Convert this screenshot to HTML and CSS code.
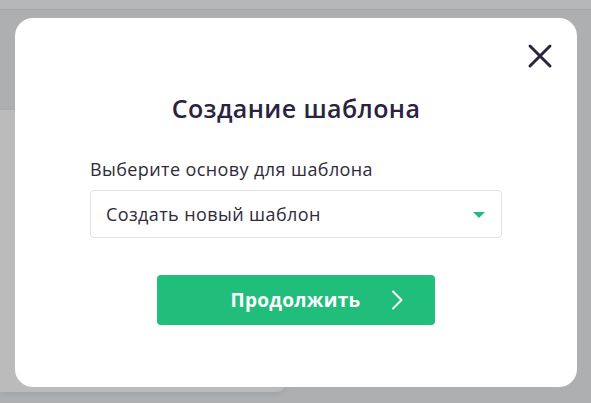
FILE: index.html
```html
<!DOCTYPE html>
<html lang="ru">
<head>
    <meta charset="UTF-8">
    <meta name="viewport" content="width=device-width, initial-scale=1.0">
    <title>Создание шаблона</title>
    <link rel="stylesheet" href="styles.css">
</head>
<body>
    <div class="page">
        <div class="topbar"></div>
        <div class="content">
            <div class="side-card"></div>
        </div>
    </div>

    <div class="overlay">
        <div class="modal">
            <button class="close-btn" aria-label="Закрыть">
                <svg width="26" height="26" viewBox="0 0 26 26">
                    <path d="M3 3 L23 23 M23 3 L3 23" stroke="#2c2540" stroke-width="3" stroke-linecap="round" fill="none"/>
                </svg>
            </button>
            <h2 class="modal-title">Создание шаблона</h2>
            <div class="field">
                <label class="field-label">Выберите основу для шаблона</label>
                <div class="select-box">
                    <span>Создать новый шаблон</span>
                    <span class="select-arrow"></span>
                </div>
            </div>
            <div class="button-container">
                <button class="continue-btn">
                    <span>Продолжить</span>
                    <svg width="13" height="20" viewBox="0 0 13 20">
                        <path d="M2 1.5 L10.5 10 L2 18.5" stroke="#fff" stroke-width="2" stroke-linecap="round" stroke-linejoin="round" fill="none"/>
                    </svg>
                </button>
            </div>
        </div>
    </div>
</body>
</html>
```

FILE: styles.css
```css
body {
    margin: 0;
    font-family: "Open Sans", "Noto Sans", sans-serif;
    background: #aeafb1;
    overflow: hidden;
}
.page {
    height: 403px;
    display: flex;
    flex-direction: column;
}
.topbar {
    height: 9px;
    background: #b6b7b9;
    border-bottom: 1px solid #a4a5a7;
}
.content {
    flex: 1;
    padding-top: 100px;
}
.side-card {
    width: 285px;
    height: 282px;
    background: #bbbbbb;
    border-radius: 0 0 8px 0;
    box-shadow: 0 2px 6px rgba(0, 0, 0, 0.08);
}
.overlay {
    position: fixed;
    inset: 0;
}
.modal {
    position: absolute;
    left: 15px;
    top: 18px;
    width: 562px;
    height: 369px;
    box-sizing: border-box;
    background: #fff;
    border-radius: 18px;
    padding: 74px 75px 0 75px;
    color: #2a2340;
}
.close-btn {
    position: absolute;
    top: 25px;
    right: 24px;
    background: none;
    border: none;
    padding: 0;
    cursor: pointer;
    display: flex;
}
.modal-title {
    margin: 0;
    text-align: center;
    font-size: 25px;
    font-weight: 600;
    line-height: 32px;
    letter-spacing: 0.4px;
}
.field {
    margin-top: 32px;
}
.field-label {
    display: block;
    font-size: 18px;
    line-height: 26px;
    letter-spacing: 0.4px;
    color: #2f2b38;
    margin-bottom: 8px;
}
.select-box {
    height: 48px;
    box-sizing: border-box;
    border: 1px solid #e2e2e4;
    border-radius: 4px;
    display: flex;
    align-items: center;
    justify-content: space-between;
    padding: 0 16px 0 15px;
    font-size: 18px;
    letter-spacing: 0.4px;
    color: #2f2b38;
}
.select-arrow {
    width: 0;
    height: 0;
    border-left: 6px solid transparent;
    border-right: 6px solid transparent;
    border-top: 6px solid #20be7a;
    margin-top: 1px;
}
.button-container {
    display: flex;
    justify-content: center;
    margin-top: 37px;
}
.continue-btn {
    width: 278px;
    height: 50px;
    background: #20be7a;
    border: none;
    border-radius: 4px;
    color: #fff;
    font-family: inherit;
    font-size: 19px;
    font-weight: 700;
    letter-spacing: 0.3px;
    display: flex;
    align-items: center;
    justify-content: center;
    gap: 30px;
    padding: 0 0 0 42px;
    cursor: pointer;
}
```
